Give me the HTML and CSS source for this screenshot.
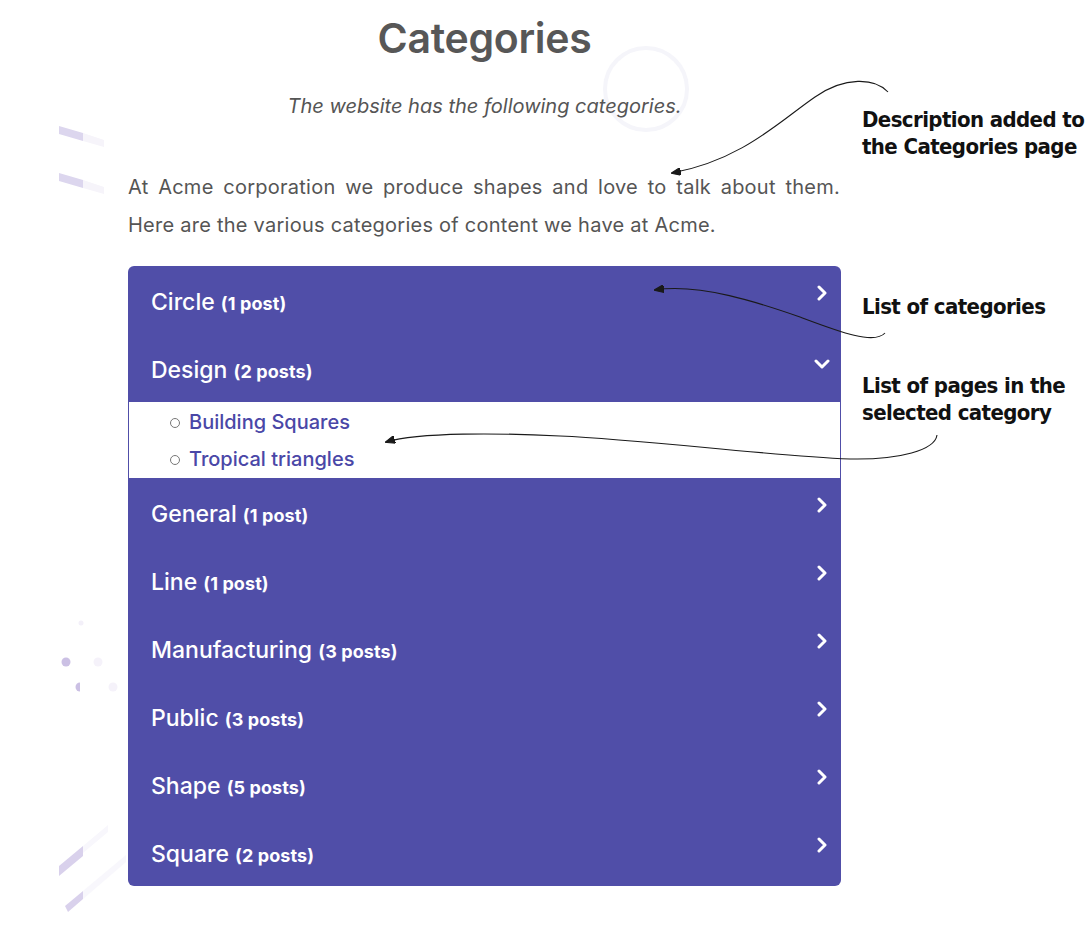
FILE: index.html
```html
<!DOCTYPE html>
<html lang="en">
<head>
<meta charset="utf-8">
<title>Categories</title>
<link rel="stylesheet" href="styles.css">
</head>
<body>
<div class="page">
  <svg class="deco" width="1089" height="945" viewBox="0 0 1089 945" aria-hidden="true">
    <circle cx="646" cy="89" r="41" fill="none" stroke="#f5f5fa" stroke-width="4"/>
    <polygon points="59,126 83,133 83,141 59,134" fill="#dcd6ee"/>
    <polygon points="83,133 104,140 104,147 83,141" fill="#f6f4fa"/>
    <polygon points="59,173 83,180 83,188 59,181" fill="#dcd6ee"/>
    <polygon points="83,180 104,187 104,194 83,188" fill="#f6f4fa"/>
    <circle cx="81" cy="623" r="2.5" fill="#f3f0f9"/>
    <circle cx="66" cy="662" r="4.5" fill="#cbc0e4"/>
    <circle cx="98" cy="662" r="4.5" fill="#f5f2fa"/>
    <path d="M80,682.5 A4.5,4.5 0 0 0 80,691.5 Z" fill="#cbc0e4"/>
    <circle cx="113" cy="687" r="4.5" fill="#f5f2fa"/>
    <polygon points="59,866 83,846 83,856 59,876" fill="#d9d1ec"/>
    <polygon points="83,846 108,825 108,832 83,853" fill="#f8f7fc"/>
    <polygon points="65,906 83,891 83,899 68,912" fill="#d9d1ec"/>
    <polygon points="83,891 126,855 126,862 83,899" fill="#f8f7fc"/>
  </svg>

  <main class="content">
    <h1 class="title">Categories</h1>
    <p class="subtitle">The website has the following categories.</p>
    <p class="intro">At Acme corporation we produce shapes and love to talk about them. Here are the various categories of content we have at Acme.</p>

    <div class="accordion">
      <div class="item">
        <div class="head"><span class="name">Circle <small>(1 post)</small></span><svg class="chev" width="16" height="16" viewBox="0 0 16 16"><polyline points="5,2 11,8 5,14"/></svg></div>
      </div>
      <div class="item open">
        <div class="head"><span class="name">Design <small>(2 posts)</small></span><svg class="chev" width="16" height="16" viewBox="0 0 16 16"><polyline points="2,5 8,11 14,5"/></svg></div>
        <ul class="pages">
          <li><a href="#">Building Squares</a></li>
          <li><a href="#">Tropical triangles</a></li>
        </ul>
      </div>
      <div class="item">
        <div class="head"><span class="name">General <small>(1 post)</small></span><svg class="chev" width="16" height="16" viewBox="0 0 16 16"><polyline points="5,2 11,8 5,14"/></svg></div>
      </div>
      <div class="item">
        <div class="head"><span class="name">Line <small>(1 post)</small></span><svg class="chev" width="16" height="16" viewBox="0 0 16 16"><polyline points="5,2 11,8 5,14"/></svg></div>
      </div>
      <div class="item">
        <div class="head"><span class="name">Manufacturing <small>(3 posts)</small></span><svg class="chev" width="16" height="16" viewBox="0 0 16 16"><polyline points="5,2 11,8 5,14"/></svg></div>
      </div>
      <div class="item">
        <div class="head"><span class="name">Public <small>(3 posts)</small></span><svg class="chev" width="16" height="16" viewBox="0 0 16 16"><polyline points="5,2 11,8 5,14"/></svg></div>
      </div>
      <div class="item">
        <div class="head"><span class="name">Shape <small>(5 posts)</small></span><svg class="chev" width="16" height="16" viewBox="0 0 16 16"><polyline points="5,2 11,8 5,14"/></svg></div>
      </div>
      <div class="item">
        <div class="head"><span class="name">Square <small>(2 posts)</small></span><svg class="chev" width="16" height="16" viewBox="0 0 16 16"><polyline points="5,2 11,8 5,14"/></svg></div>
      </div>
    </div>
  </main>

  <svg class="arrows" width="1089" height="945" viewBox="0 0 1089 945" aria-hidden="true">
    <defs>
      <marker id="head" markerUnits="userSpaceOnUse" markerWidth="10" markerHeight="8" refX="9" refY="4" orient="auto-start-reverse">
        <path d="M0,0 L10,4 L0,8 Z" fill="#1a1a1a"/>
      </marker>
    </defs>
    <path d="M888,92 C875,78 845,76 815,97 C780,121 742,160 672,173" marker-end="url(#head)"/>
    <path d="M655,290 C700,283 760,303 800,317 C840,332 874,345 885,333" marker-start="url(#head)"/>
    <path d="M386,442 C420,432 500,433 560,436 C650,440 760,455 850,459 C900,460 935,450 937,435" marker-start="url(#head)"/>
  </svg>

  <p class="note note-desc">Description added to<br>the Categories page</p>
  <p class="note note-list">List of categories</p>
  <p class="note note-pages">List of pages in the<br>selected category</p>
</div>
</body>
</html>
```

FILE: styles.css
```css
* { box-sizing: border-box; }

html, body {
  margin: 0;
  padding: 0;
  background: #ffffff;
}

body {
  font-family: Inter, "Noto Sans", "Liberation Sans", sans-serif;
  color: #555555;
}

.page {
  position: relative;
  width: 1089px;
  height: 945px;
  overflow: hidden;
}

.deco {
  position: absolute;
  left: 0;
  top: 0;
  z-index: 0;
}

.content {
  position: relative;
  z-index: 1;
  width: 713px;
  margin-left: 128px;
}

.title {
  margin: 13px 0 0;
  font-size: 41px;
  line-height: 50px;
  font-weight: 600;
  text-align: center;
  color: #575757;
  letter-spacing: -0.3px;
}

.subtitle {
  margin: 31px 0 0;
  font-size: 20px;
  line-height: 24px;
  font-style: italic;
  text-align: center;
  color: #555555;
}

.intro {
  margin: 50px 0 0;
  width: 712px;
  font-size: 20px;
  line-height: 38px;
  letter-spacing: 0.25px;
  text-align: justify;
  color: #555555;
}

.accordion {
  margin-top: 22px;
  background: #504ea8;
  border-radius: 6px;
  overflow: hidden;
}

.head {
  display: flex;
  justify-content: space-between;
  align-items: flex-start;
  height: 68px;
  padding: 22px 11px 0 23px;
  color: #ffffff;
}

.name {
  font-size: 23px;
  line-height: 28px;
  font-weight: 500;
}

.name small {
  font-size: 18px;
  font-weight: 700;
  letter-spacing: 0.1px;
}

.chev {
  margin-top: -3px;
  fill: none;
  stroke: #ffffff;
  stroke-width: 3;
  stroke-linecap: round;
  stroke-linejoin: round;
}

.open .chev {
  margin-top: 0;
}

.pages {
  list-style: none;
  margin: 0 1px;
  padding: 2px 0 0 41px;
  height: 76px;
  background: #ffffff;
}

.pages li {
  display: flex;
  align-items: center;
  font-size: 20px;
  line-height: 37px;
}

.pages li::before {
  content: "";
  width: 8px;
  height: 8px;
  border: 1px solid #777777;
  border-radius: 50%;
  margin-right: 9px;
}

.pages a {
  color: #4a47a7;
  text-decoration: none;
  font-weight: 500;
}

.arrows {
  position: absolute;
  left: 0;
  top: 0;
  z-index: 2;
  fill: none;
  stroke: #1a1a1a;
  stroke-width: 1.1;
}

.note {
  position: absolute;
  left: 862px;
  margin: 0;
  z-index: 3;
  font-family: "DejaVu Sans Condensed", "DejaVu Sans", sans-serif;
  font-stretch: condensed;
  font-weight: 700;
  font-size: 22px;
  line-height: 27px;
  letter-spacing: -0.6px;
  color: #111111;
  white-space: nowrap;
}

.note-desc { top: 106px; }
.note-list { top: 293px; }
.note-pages { top: 372px; }
```
